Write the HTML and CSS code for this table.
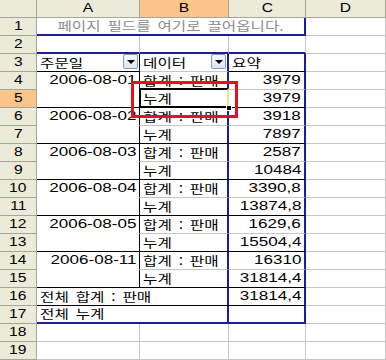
FILE: index.html
```html
<!DOCTYPE html>
<html lang="ko">
<head>
<meta charset="utf-8">
<link rel="stylesheet" href="styles.css">
</head>
<body>
<div class="sheet">
  <div class="sel-wrap">
  <div class="grid">
    <div class="h corner"></div>
    <div class="h col"><span class="n">A</span></div>
    <div class="h col on"><span class="n">B</span></div>
    <div class="h col"><span class="n">C</span></div>
    <div class="h col"><span class="n">D</span></div>

    <div class="h rh"><span class="n">1</span></div>
    <div class="c page"><span class="k gray">페이지 필드를 여기로 끌어옵니다.</span></div>
    <div class="c"></div>

    <div class="h rh"><span class="n">2</span></div>
    <div class="c bb2"></div>
    <div class="c bb2"></div>
    <div class="c bb2"></div>
    <div class="c"></div>

    <div class="h rh"><span class="n">3</span></div>
    <div class="c fa bk"><span class="k">주문일</span><span class="dd"></span></div>
    <div class="c fb"><span class="k">데이터</span><span class="dd"></span></div>
    <div class="c fc bk"><span class="k">요약</span></div>
    <div class="c"></div>

    <div class="h rh"><span class="n">4</span></div>
    <div class="c ca top r"><span class="n">2006-08-01</span></div>
    <div class="c cb"><span class="k">합계 : 판매</span></div>
    <div class="c cc r"><span class="n">3979</span></div>
    <div class="c"></div>

    <div class="h rh on"><span class="n">5</span></div>
    <div class="c ca bk"></div>
    <div class="c cb bk"><span class="k">누계</span></div>
    <div class="c cc bk r"><span class="n">3979</span></div>
    <div class="c"></div>

    <div class="h rh"><span class="n">6</span></div>
    <div class="c ca top r"><span class="n">2006-08-02</span></div>
    <div class="c cb"><span class="k">합계 : 판매</span></div>
    <div class="c cc r"><span class="n">3918</span></div>
    <div class="c"></div>

    <div class="h rh"><span class="n">7</span></div>
    <div class="c ca bk"></div>
    <div class="c cb bk"><span class="k">누계</span></div>
    <div class="c cc bk r"><span class="n">7897</span></div>
    <div class="c"></div>

    <div class="h rh"><span class="n">8</span></div>
    <div class="c ca top r"><span class="n">2006-08-03</span></div>
    <div class="c cb"><span class="k">합계 : 판매</span></div>
    <div class="c cc r"><span class="n">2587</span></div>
    <div class="c"></div>

    <div class="h rh"><span class="n">9</span></div>
    <div class="c ca bk"></div>
    <div class="c cb bk"><span class="k">누계</span></div>
    <div class="c cc bk r"><span class="n">10484</span></div>
    <div class="c"></div>

    <div class="h rh"><span class="n">10</span></div>
    <div class="c ca top r"><span class="n">2006-08-04</span></div>
    <div class="c cb"><span class="k">합계 : 판매</span></div>
    <div class="c cc r"><span class="n">3390,8</span></div>
    <div class="c"></div>

    <div class="h rh"><span class="n">11</span></div>
    <div class="c ca bk"></div>
    <div class="c cb bk"><span class="k">누계</span></div>
    <div class="c cc bk r"><span class="n">13874,8</span></div>
    <div class="c"></div>

    <div class="h rh"><span class="n">12</span></div>
    <div class="c ca top r"><span class="n">2006-08-05</span></div>
    <div class="c cb"><span class="k">합계 : 판매</span></div>
    <div class="c cc r"><span class="n">1629,6</span></div>
    <div class="c"></div>

    <div class="h rh"><span class="n">13</span></div>
    <div class="c ca bk"></div>
    <div class="c cb bk"><span class="k">누계</span></div>
    <div class="c cc bk r"><span class="n">15504,4</span></div>
    <div class="c"></div>

    <div class="h rh"><span class="n">14</span></div>
    <div class="c ca top r"><span class="n">2006-08-11</span></div>
    <div class="c cb"><span class="k">합계 : 판매</span></div>
    <div class="c cc r"><span class="n">16310</span></div>
    <div class="c"></div>

    <div class="h rh"><span class="n">15</span></div>
    <div class="c ca bk"></div>
    <div class="c cb bk"><span class="k">누계</span></div>
    <div class="c cc bk r"><span class="n">31814,4</span></div>
    <div class="c"></div>

    <div class="h rh"><span class="n">16</span></div>
    <div class="c tot bk"><span class="k">전체 합계 : 판매</span></div>
    <div class="c cc bk r"><span class="n">31814,4</span></div>
    <div class="c"></div>

    <div class="h rh"><span class="n">17</span></div>
    <div class="c tot last"><span class="k">전체 누계</span></div>
    <div class="c cc last"></div>
    <div class="c"></div>

    <div class="h rh"><span class="n">18</span></div>
    <div class="c"></div>
    <div class="c"></div>
    <div class="c"></div>
    <div class="c"></div>

    <div class="h rh"><span class="n">19</span></div>
    <div class="c"></div>
    <div class="c"></div>
    <div class="c"></div>
    <div class="c"></div>
  </div>
  <div class="cursor"><span class="handle"></span></div>
  <div class="mark"></div>
  </div>
</div>
</body>
</html>
```

FILE: styles.css
```css
* { box-sizing: border-box; }
html, body { margin: 0; padding: 0; background: #fff; }
.sheet { width: 386px; height: 360px; overflow: hidden; }
.sel-wrap { position: relative; }
.grid {
  display: grid;
  grid-template-columns: 37px 103px 89px 77px 80px;
  grid-auto-rows: 18px;
  font-family: "Liberation Sans", "Noto Sans CJK KR", sans-serif;
  font-size: 12px;
  color: #000;
}
.c {
  border-right: 1px solid #c6c6c6;
  border-bottom: 1px solid #c6c6c6;
  background: #fff;
  display: flex;
  align-items: flex-end;
  padding: 0 3px 1px 3px;
  line-height: 15px;
  white-space: nowrap;
  overflow: visible;
}
.c.r { justify-content: flex-end; }
.h {
  background: #ecead9;
  border-right: 1px solid #a7a596;
  border-bottom: 1px solid #a7a596;
  display: flex;
  align-items: center;
  justify-content: center;
  line-height: 15px;
  color: #000;
}
.h.on { background: #f9c58a; }
.corner { background: #ecead9; }
.n {
  display: inline-block;
  font-family: "Liberation Sans", sans-serif;
  transform: scaleX(1.42);
}
.h .n { transform: scaleX(1.3); transform-origin: center; }
.c.r .n { transform-origin: right bottom; }
.c .n, .c .k { transform-origin: left bottom; }
.k {
  display: inline-block;
  font-family: "Noto Sans CJK KR", sans-serif;
  font-size: 12.5px;
  line-height: 14px;
  word-spacing: 2px;
  transform: scaleX(1.25);
}
.gray { color: #8c8c8c; }

.page {
  grid-column: span 3;
  justify-content: center;
  border-bottom: 2px solid #1d1d9c;
  border-right: 2px solid #1d1d9c;
}
.c.page .k { transform-origin: center bottom; }
.bb2 { border-bottom: 2px solid #1d1d9c; }

.fa, .ca { border-right-color: #000; }
.fb, .cb, .tot { border-right: 2px solid #1d1d9c; }
.fc, .cc { border-right: 2px solid #1d1d9c; }
.bk { border-bottom-color: #000; }
.top { border-bottom-color: #fff; }
.tot { grid-column: span 2; }
.last { border-bottom: 2px solid #1d1d9c; }

.fa, .fb { justify-content: space-between; padding-right: 1px; }
.dd {
  width: 15px;
  height: 15px;
  margin-bottom: 1px;
  border: 1px solid #7f9db9;
  border-radius: 2px;
  background: linear-gradient(#f4f6f9, #dfe5ee);
  position: relative;
  flex: none;
}
.dd::after {
  content: "";
  position: absolute;
  left: 3px;
  top: 5px;
  border-left: 4px solid transparent;
  border-right: 4px solid transparent;
  border-top: 4px solid #000;
}

.cursor {
  position: absolute;
  left: 139px;
  top: 88px;
  width: 90px;
  height: 20px;
  border: 2px solid #000;
  border-right-color: #e6e67a;
}
.handle {
  position: absolute;
  right: -5px;
  bottom: -5px;
  width: 6px;
  height: 6px;
  background: #000;
  border: 1px solid #fff;
}
.mark {
  position: absolute;
  left: 131px;
  top: 81px;
  width: 107px;
  height: 37px;
  border: 3px solid #e2131b;
}
```
